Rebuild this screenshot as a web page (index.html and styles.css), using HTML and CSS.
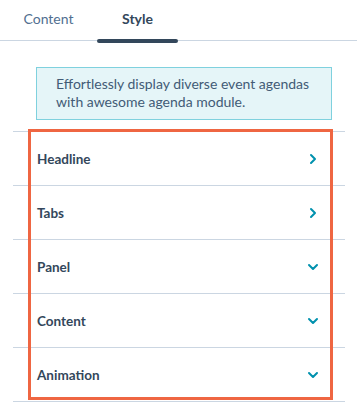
FILE: index.html
```html
<!DOCTYPE html>
<html>
<head>
<meta charset="utf-8">
<link rel="stylesheet" href="styles.css">
</head>
<body>
<div class="tabs">
  <div class="tab">Content</div>
  <div class="tab active">Style</div>
</div>
<div class="info">Effortlessly display diverse event agendas with awesome agenda module.</div>
<div class="list">
  <div class="row"><span>Headline</span><svg class="chev" width="12" height="12" viewBox="0 0 12 12"><path d="M4 2 L8 6 L4 10" fill="none" stroke="#0091ae" stroke-width="2" stroke-linecap="round" stroke-linejoin="round"/></svg></div>
  <div class="row"><span>Tabs</span><svg class="chev" width="12" height="12" viewBox="0 0 12 12"><path d="M4 2 L8 6 L4 10" fill="none" stroke="#0091ae" stroke-width="2" stroke-linecap="round" stroke-linejoin="round"/></svg></div>
  <div class="row"><span>Panel</span><svg class="chev" width="12" height="12" viewBox="0 0 12 12"><path d="M2 4 L6 8 L10 4" fill="none" stroke="#0091ae" stroke-width="2" stroke-linecap="round" stroke-linejoin="round"/></svg></div>
  <div class="row"><span>Content</span><svg class="chev" width="12" height="12" viewBox="0 0 12 12"><path d="M2 4 L6 8 L10 4" fill="none" stroke="#0091ae" stroke-width="2" stroke-linecap="round" stroke-linejoin="round"/></svg></div>
  <div class="row"><span>Animation</span><svg class="chev" width="12" height="12" viewBox="0 0 12 12"><path d="M2 4 L6 8 L10 4" fill="none" stroke="#0091ae" stroke-width="2" stroke-linecap="round" stroke-linejoin="round"/></svg></div>
  <div class="highlight"></div>
</div>
</body>
</html>
```

FILE: styles.css
```css
html, body {
  margin: 0;
  padding: 0;
  background: #ffffff;
  font-family: "Lato", "Open Sans", sans-serif;
  color: #33475b;
  width: 357px;
  height: 402px;
  overflow: hidden;
}
.tabs {
  display: flex;
  gap: 8px;
  padding-left: 8px;
  height: 40px;
  border-bottom: 1px solid #cbd6e2;
}
.tab {
  width: 81px;
  display: flex;
  align-items: center;
  justify-content: center;
  font-size: 14px;
  color: #516f90;
  position: relative;
  padding-bottom: 4px;
}
.tab.active {
  color: #33475b;
  font-weight: 700;
}
.tab.active::after {
  content: "";
  position: absolute;
  left: 0;
  right: 0;
  bottom: -3px;
  height: 4px;
  border-radius: 2px;
  background: #33475b;
}
.info {
  margin: 26px 0 0 36px;
  width: 266px;
  padding: 7px 9px 8px 19px;
  border: 1px solid #7fd1de;
  background: #e5f5f8;
  font-size: 14px;
  line-height: 18px;
  color: #425b76;
}
.list {
  position: relative;
  margin: 11px 0 0 13px;
  width: 332px;
  border-top: 1px solid #cbd6e2;
}
.row {
  height: 53px;
  border-bottom: 1px solid #cbd6e2;
  display: flex;
  align-items: center;
  justify-content: space-between;
  padding: 0 26px 0 24px;
  font-size: 13.5px;
  font-weight: 700;
  color: #33475b;
}
.highlight {
  position: absolute;
  left: 15px;
  top: -3px;
  width: 299px;
  height: 265px;
  border: 3px solid #ef6642;
}
```
